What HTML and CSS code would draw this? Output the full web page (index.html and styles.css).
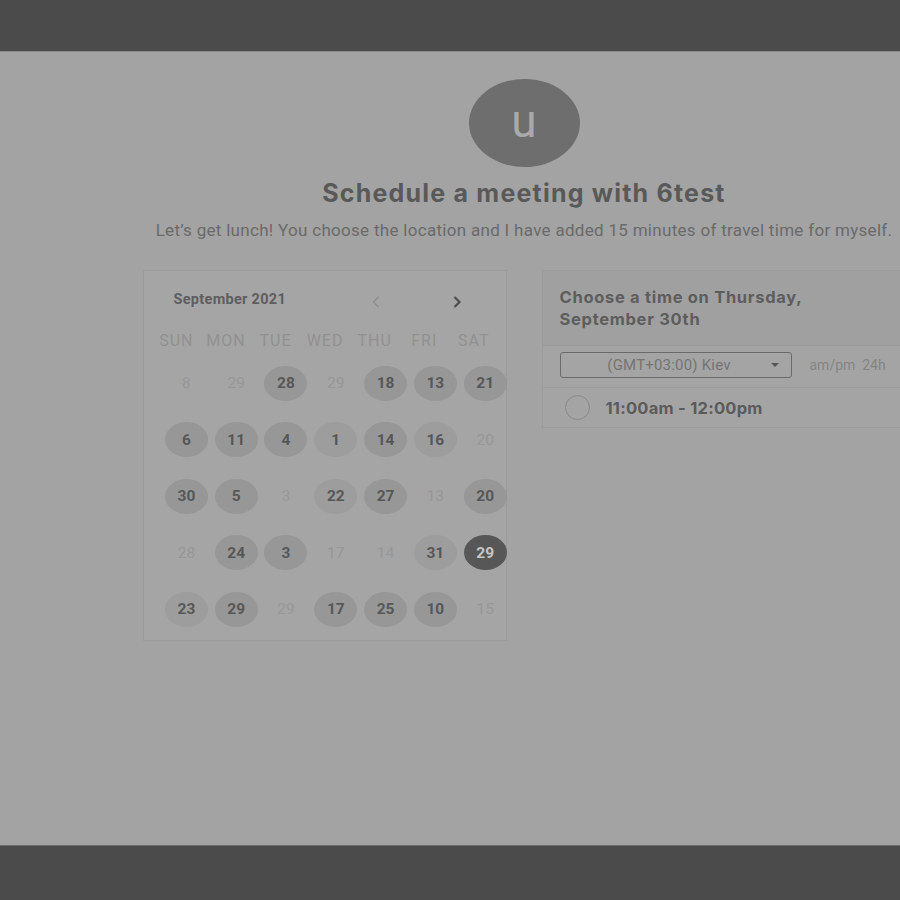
FILE: index.html
```html
<!DOCTYPE html>
<html lang="en">
<head>
<meta charset="utf-8">
<title>Schedule a meeting with 6test</title>
<link rel="stylesheet" href="styles.css">
</head>
<body>
<div class="topbar"></div>
<main class="main">
  <div class="page">
    <div class="avatar"><span>u</span></div>
    <h1 class="title">Schedule a meeting with 6test</h1>
    <p class="subtitle">Let’s get lunch! You choose the location and I have added 15 minutes of travel time for myself.</p>
    <div class="cards">
      <section class="calendar">
        <div class="month-row">
          <span class="month">September 2021</span>
          <button class="nav prev" aria-label="Previous month">
            <svg width="12" height="16" viewBox="0 0 12 16"><path d="M8.5 3 L3.5 8 L8.5 13" fill="none" stroke="#8e8e8e" stroke-width="1.6"/></svg>
          </button>
          <button class="nav next" aria-label="Next month">
            <svg width="12" height="16" viewBox="0 0 12 16"><path d="M3.5 3 L8.5 8 L3.5 13" fill="none" stroke="#4e4e4e" stroke-width="2.2"/></svg>
          </button>
        </div>
        <div class="weekdays">
          <span>SUN</span><span>MON</span><span>TUE</span><span>WED</span><span>THU</span><span>FRI</span><span>SAT</span>
        </div>
        <div class="dates">
          <span class="d off">8</span><span class="d off">29</span><span class="d on">28</span><span class="d off">29</span><span class="d on">18</span><span class="d on">13</span><span class="d on">21</span>
          <span class="d on">6</span><span class="d on">11</span><span class="d on">4</span><span class="d on dot">1</span><span class="d on">14</span><span class="d on dot">16</span><span class="d off">20</span>
          <span class="d on">30</span><span class="d on">5</span><span class="d off">3</span><span class="d on dot">22</span><span class="d on">27</span><span class="d off">13</span><span class="d on">20</span>
          <span class="d off">28</span><span class="d on">24</span><span class="d on">3</span><span class="d off">17</span><span class="d off">14</span><span class="d on dot">31</span><span class="d sel">29</span>
          <span class="d on dot">23</span><span class="d on">29</span><span class="d off">29</span><span class="d on">17</span><span class="d on">25</span><span class="d on">10</span><span class="d off">15</span>
        </div>
      </section>
      <section class="times">
        <div class="times-head">Choose a time on Thursday,<br>September 30th</div>
        <div class="tz-row">
          <div class="select">
            <span class="select-text">(GMT+03:00) Kiev</span>
            <span class="caret"></span>
          </div>
          <span class="fmt">am/pm&nbsp; 24h</span>
        </div>
        <div class="slot">
          <span class="radio"></span>
          <span class="slot-text">11:00am - 12:00pm</span>
        </div>
      </section>
    </div>
  </div>
</main>
<div class="bottombar"></div>
</body>
</html>
```
FILE: styles.css
```css
html, body {
  margin: 0;
  padding: 0;
}
body {
  width: 900px;
  height: 900px;
  overflow: hidden;
  background: #a3a3a3;
  font-family: Roboto, "Liberation Sans", sans-serif;
}
.topbar {
  height: 51px;
  background: #4b4b4b;
  border-bottom: 1px solid #8b8b8b;
}
.main {
  height: 793px;
  background: #a3a3a3;
  overflow: hidden;
}
.bottombar {
  height: 54px;
  background: #4b4b4b;
  border-top: 1px solid #6c6c6c;
}
.page {
  width: 1048px;
  padding-top: 27px;
  text-align: center;
}
.avatar {
  width: 111px;
  height: 88px;
  border-radius: 50%;
  background: #6e6e6e;
  margin: 0 auto;
  display: flex;
  align-items: center;
  justify-content: center;
}
.avatar span {
  font-family: Roboto, sans-serif;
  font-size: 46px;
  line-height: 1;
  color: #a9a9a9;
  margin-top: -4px;
}
.title {
  margin: 12px 0 0;
  font-family: Inter, sans-serif;
  font-weight: 700;
  font-size: 25px;
  line-height: 28px;
  color: #595959;
  letter-spacing: 1.2px;
}
.subtitle {
  margin: 13px 0 0;
  font-size: 17px;
  line-height: 20px;
  color: #6a6a6a;
  letter-spacing: 0.3px;
}
.cards {
  display: flex;
  justify-content: center;
  align-items: flex-start;
  gap: 35px;
  margin-top: 30px;
  text-align: left;
}
.calendar {
  width: 354px;
  border: 1px solid #9b9b9b;
  background: #a5a5a5;
  padding: 0 0 2px 8px;
}
.month-row {
  display: flex;
  align-items: center;
  height: 30px;
  margin-top: 13px;
}
.month {
  flex: 1;
  margin-left: 22px;
  font-weight: 700;
  font-size: 14.5px;
  letter-spacing: 0.3px;
  color: #5e5e5e;
}
.nav {
  width: 30px;
  height: 30px;
  padding: 0;
  border: 0;
  background: none;
  display: flex;
  align-items: center;
  justify-content: center;
}
.prev {
  margin-right: 51px;
  margin-top: 6px;
}
.next {
  margin-right: 34px;
  margin-top: 6px;
}
.weekdays {
  display: grid;
  grid-template-columns: repeat(7, 49.6px);
  height: 20px;
  margin-top: 17px;
  font-size: 16px;
  line-height: 20px;
  letter-spacing: 1px;
  color: #919191;
  text-align: center;
}
.dates {
  display: grid;
  grid-template-columns: repeat(7, 49.8px);
  grid-auto-rows: 56.5px;
  margin-top: 4px;
  margin-left: 10px;
}
.d {
  display: flex;
  align-items: center;
  justify-content: center;
  justify-self: center;
  align-self: center;
  width: 43px;
  height: 35px;
  border-radius: 50%;
  font-size: 15.5px;
}
.off {
  color: #979797;
}
.on {
  background: #979797;
  color: #575757;
  font-weight: 700;
}
.dot {
  background: #9d9d9d;
}
.sel {
  background: #575757;
  color: #c6c6c6;
  font-weight: 700;
}
.times {
  width: 362px;
  border: 1px solid #9b9b9b;
  background: #a4a4a4;
}
.times-head {
  padding: 15px 17px 15px;
  background: #a0a0a0;
  border-bottom: 1px solid #9a9a9a;
  font-family: Inter, sans-serif;
  font-weight: 700;
  font-size: 16.5px;
  letter-spacing: 0.7px;
  line-height: 22px;
  color: #5d5d5d;
  white-space: nowrap;
}
.tz-row {
  display: flex;
  align-items: center;
  padding: 6px 17px 9px;
  border-bottom: 1px solid #9d9d9d;
}
.select {
  width: 232px;
  height: 26px;
  box-sizing: border-box;
  border: 1px solid #6a6a6a;
  border-radius: 3px;
  display: flex;
  align-items: center;
}
.select-text {
  flex: 1;
  text-align: center;
  font-size: 15px;
  letter-spacing: 0.2px;
  color: #747474;
  padding-left: 32px;
}
.caret {
  width: 0;
  height: 0;
  border-left: 4px solid transparent;
  border-right: 4px solid transparent;
  border-top: 4px solid #555;
  margin: 0 12px 0 25px;
}
.fmt {
  margin-left: 18px;
  font-size: 14px;
  color: #858585;
}
.slot {
  display: flex;
  align-items: center;
  height: 39px;
  padding-left: 22px;
  gap: 16px;
}
.radio {
  width: 25px;
  height: 25px;
  border: 1.5px solid #8a8a8a;
  border-radius: 50%;
  box-sizing: border-box;
}
.slot-text {
  font-family: Inter, sans-serif;
  font-weight: 700;
  font-size: 16.5px;
  letter-spacing: 0.25px;
  color: #5b5b5b;
}
```
